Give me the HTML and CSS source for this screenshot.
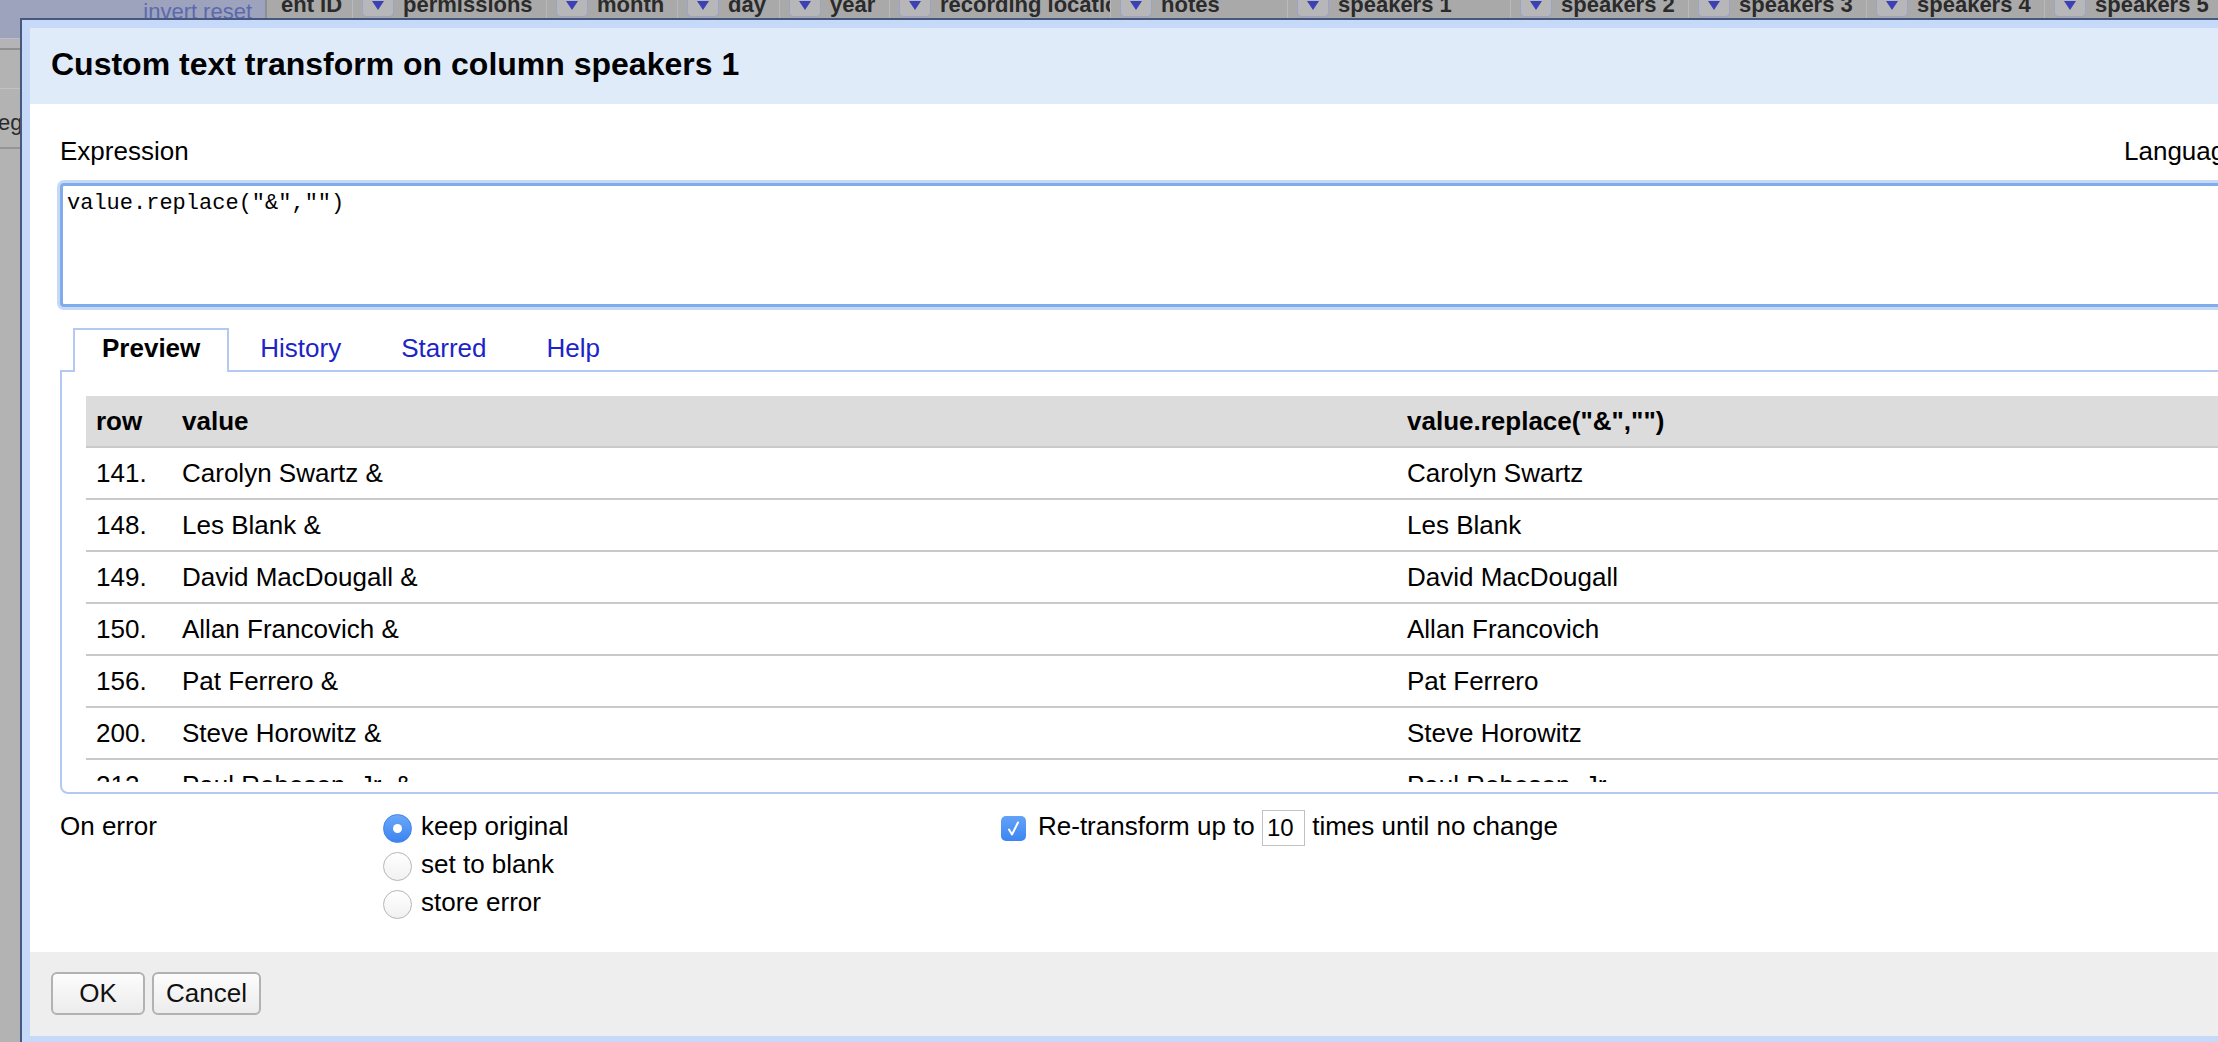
FILE: index.html
```html
<!DOCTYPE html>
<html>
<head>
<meta charset="utf-8">
<title>Custom text transform on column speakers 1</title>
<link rel="stylesheet" href="styles.css">
</head>
<body>
<div class="page">
  <aside class="sidebar">
    <div class="side-top"><span class="side-link">invert</span><span class="side-link">reset</span></div>
    <div class="side-sub"></div>
    <div class="side-row"></div>
    <div class="side-row-text"><span class="side-word">eg</span></div>
  </aside>
  <div class="main">
    <div class="colbar">
      <div class="col col-first" style="width:85px"><span class="col-name">ent ID</span></div>
      <div class="col" style="width:194px"><span class="dd"></span><span class="col-name">permissions</span></div>
      <div class="col" style="width:131px"><span class="dd"></span><span class="col-name">month</span></div>
      <div class="col" style="width:102px"><span class="dd"></span><span class="col-name">day</span></div>
      <div class="col" style="width:110px"><span class="dd"></span><span class="col-name">year</span></div>
      <div class="col" style="width:221px"><span class="dd"></span><span class="col-name">recording location</span></div>
      <div class="col" style="width:177px"><span class="dd"></span><span class="col-name">notes</span></div>
      <div class="col" style="width:223px"><span class="dd"></span><span class="col-name">speakers 1</span></div>
      <div class="col" style="width:178px"><span class="dd"></span><span class="col-name">speakers 2</span></div>
      <div class="col" style="width:178px"><span class="dd"></span><span class="col-name">speakers 3</span></div>
      <div class="col" style="width:178px"><span class="dd"></span><span class="col-name">speakers 4</span></div>
      <div class="col" style="width:178px"><span class="dd"></span><span class="col-name">speakers 5</span></div>
    </div>
  </div>
</div>

<div class="dialog">
  <div class="dialog-header">Custom text transform on column speakers 1</div>
  <div class="dialog-body">
    <div class="expr-head">
      <div>Expression</div>
      <div class="lang">Language: <span class="lang-select">General Refine Expression Language (GREL)</span></div>
    </div>
    <textarea class="expr-input" spellcheck="false">value.replace("&amp;","")</textarea>

    <div class="tabs">
      <span class="tab tab-active">Preview</span>
      <span class="tab">History</span>
      <span class="tab">Starred</span>
      <span class="tab">Help</span>
    </div>
    <div class="panel">
      <div class="preview">
        <div class="prow prow-head"><span class="pcell">row</span><span class="pcell">value</span><span class="pcell">value.replace("&amp;","")</span></div>
        <div class="prow"><span class="pcell">141.</span><span class="pcell">Carolyn Swartz &amp;</span><span class="pcell">Carolyn Swartz</span></div>
        <div class="prow"><span class="pcell">148.</span><span class="pcell">Les Blank &amp;</span><span class="pcell">Les Blank</span></div>
        <div class="prow"><span class="pcell">149.</span><span class="pcell">David MacDougall &amp;</span><span class="pcell">David MacDougall</span></div>
        <div class="prow"><span class="pcell">150.</span><span class="pcell">Allan Francovich &amp;</span><span class="pcell">Allan Francovich</span></div>
        <div class="prow"><span class="pcell">156.</span><span class="pcell">Pat Ferrero &amp;</span><span class="pcell">Pat Ferrero</span></div>
        <div class="prow"><span class="pcell">200.</span><span class="pcell">Steve Horowitz &amp;</span><span class="pcell">Steve Horowitz</span></div>
        <div class="prow"><span class="pcell">212.</span><span class="pcell">Paul Robeson, Jr. &amp;</span><span class="pcell">Paul Robeson, Jr.</span></div>
      </div>
    </div>

    <div class="options">
      <div class="opt-title">On error</div>
      <div class="opt-radios">
        <div class="radio-row"><span class="radio radio-on"></span><span class="opt-label">keep original</span></div>
        <div class="radio-row"><span class="radio"></span><span class="opt-label">set to blank</span></div>
        <div class="radio-row"><span class="radio"></span><span class="opt-label">store error</span></div>
      </div>
      <div class="opt-repeat">
        <span class="chk"><svg viewBox="0 0 25 25" width="25" height="25"><path d="M8 13.5 L11 18.5 L17 6.5" fill="none" stroke="#ffffff" stroke-width="2" stroke-linecap="round" stroke-linejoin="round"/></svg></span><span class="chk-label">Re-transform up to <span class="num-input">10</span> times until no change</span>
      </div>
    </div>
  </div>
  <div class="dialog-footer">
    <button class="btn btn-ok">OK</button><button class="btn">Cancel</button>
  </div>
</div>
</body>
</html>
```

FILE: styles.css
```css
* { box-sizing: border-box; }

html, body {
  margin: 0;
  padding: 0;
}

body {
  width: 2218px;
  height: 1042px;
  overflow: hidden;
  position: relative;
  background: #b3b3b3;
  font-family: "Liberation Sans", Arial, Helvetica, sans-serif;
  color: #000;
}

/* ---------- background page ---------- */
.page {
  display: flex;
  height: 1042px;
}

.sidebar {
  width: 265px;
  flex: none;
  background: #b3b3b3;
}

.side-top {
  height: 39px;
  background: #9ea3bd;
  border-bottom: 1px solid #b9bccd;
  display: flex;
  justify-content: flex-end;
  gap: 6px;
  padding: 1px 13px 0 0;
}

.side-link {
  font-size: 22px;
  line-height: 22px;
  color: #5b6aae;
}

.side-sub {
  height: 11px;
  background: #b4b4b6;
  border-bottom: 2px solid #8f8f8f;
}

.side-row {
  height: 39px;
  border-bottom: 1px solid #c2c2c2;
}

.side-row-text {
  height: 60px;
  border-bottom: 2px solid #959595;
  padding-top: 23px;
  overflow: hidden;
}

.side-word {
  display: block;
  margin-left: -2px;
  font-size: 22px;
  line-height: 22px;
  color: #2a2a2a;
}

.main {
  flex: 1;
  min-width: 0;
}

.colbar {
  height: 19px;
  background: #a9a9aa;
  border-left: 2px solid #8d8e96;
  display: flex;
  overflow: hidden;
}

.col {
  flex: none;
  display: flex;
  align-items: flex-start;
  border-left: 1px solid #b9b9bc;
  padding-left: 9px;
  overflow: hidden;
  white-space: nowrap;
}

.col-first {
  border-left: none;
  padding-left: 14px;
}

.dd {
  flex: none;
  position: relative;
  width: 32px;
  height: 17px;
  margin-right: 9px;
  background: #b7b7b9;
  border: 1px solid #9ca2c8;
  border-top: none;
  border-radius: 0 0 5px 5px;
}

.dd::after {
  content: "";
  position: absolute;
  left: 9px;
  top: 1px;
  border-left: 6px solid transparent;
  border-right: 6px solid transparent;
  border-top: 9px solid #3b41b4;
}

.col-name {
  font-size: 22px;
  line-height: 22px;
  font-weight: bold;
  color: #2b2b2b;
  margin-top: -6px;
}

/* ---------- dialog ---------- */
.dialog {
  position: absolute;
  left: 22px;
  top: 20px;
  width: 2800px;
  border: 8px solid #c6d9f8;
  box-shadow: 0 0 0 2px #45597e;
  background: #fff;
}

.dialog-header {
  background: #e0ebfa;
  padding: 18px 22px 22px 21px;
  font-size: 32px;
  line-height: 36px;
  font-weight: bold;
}

.dialog-body {
  padding: 32px 0 31px 30px;
  font-size: 26px;
  line-height: 30px;
}

.expr-head {
  display: grid;
  grid-template-columns: 2064px auto;
}

.lang-select {
  display: inline-block;
  margin-left: 10px;
}

.expr-input {
  display: block;
  margin-top: 17px;
  width: 2700px;
  height: 124px;
  padding: 5px 4px;
  border: 3px solid #80ade9;
  border-radius: 4px;
  box-shadow: 0 0 0 3px #c6daf8;
  outline: none;
  resize: none;
  font-family: "Liberation Mono", "Courier New", monospace;
  font-size: 22px;
  line-height: 26px;
  color: #000;
  background: #fff;
}

.tabs {
  display: flex;
  margin-top: 21px;
  padding-left: 13px;
  position: relative;
  z-index: 1;
}

.tab {
  padding: 3px 27px 9px;
  margin-right: 2px;
  margin-bottom: -2px;
  border: 2px solid transparent;
  border-bottom: none;
  color: #1c24c8;
  background: transparent;
}

.tab-active {
  color: #000;
  font-weight: bold;
  background: #fff;
  border-color: #b4c8f4;
}

.panel {
  width: 2700px;
  border: 2px solid #b4c8f4;
  border-radius: 0 0 0 8px;
  padding: 24px 0 10px 24px;
}

.preview {
  height: 386px;
  overflow: hidden;
}

.prow {
  display: grid;
  grid-template-columns: 86px 1225px 1225px;
  height: 52px;
  border-bottom: 2px solid #c9c9c9;
  align-items: center;
  white-space: nowrap;
}

.prow-head {
  background: #dcdcdc;
  font-weight: bold;
}

.pcell {
  padding-left: 10px;
}

/* ---------- options ---------- */
.options {
  display: grid;
  grid-template-columns: 323px 618px 1fr;
  margin-top: 13px;
  line-height: 38px;
}

.radio-row {
  height: 38px;
}

.radio {
  display: inline-block;
  position: relative;
  width: 29px;
  height: 29px;
  border-radius: 50%;
  vertical-align: middle;
  background: linear-gradient(#ffffff, #f1f1f1);
  border: 1.5px solid #b6b6b6;
}

.radio-on {
  background: linear-gradient(#6aa8f8, #3b84f0);
  border: 1px solid #3f82e8;
}

.radio-on::after {
  content: "";
  position: absolute;
  left: 50%;
  top: 50%;
  width: 9px;
  height: 9px;
  margin: -4.5px 0 0 -4.5px;
  border-radius: 50%;
  background: #fff;
}

.opt-label {
  margin-left: 9px;
}

.chk {
  display: inline-block;
  width: 25px;
  height: 25px;
  border-radius: 5px;
  vertical-align: middle;
  background: linear-gradient(#63a2f8, #3d86f1);
  line-height: 0;
}

.chk svg {
  display: block;
}

.chk-label {
  margin-left: 12px;
}

.num-input {
  display: inline-block;
  width: 43px;
  height: 36px;
  padding-left: 4px;
  border: 1px solid #c2c2c2;
  font-size: 24px;
  line-height: 34px;
  vertical-align: middle;
  background: #fff;
}

/* ---------- footer ---------- */
.dialog-footer {
  background: #eeeeee;
  padding: 20px 21px 21px;
  display: flex;
  gap: 7px;
}

.btn {
  height: 43px;
  min-width: 94px;
  padding: 0 12px;
  border: 2px solid #b2b2b2;
  border-radius: 6px;
  background: linear-gradient(#fcfcfc, #ececec);
  font-family: "Liberation Sans", Arial, Helvetica, sans-serif;
  font-size: 26px;
  color: #111;
}
```
